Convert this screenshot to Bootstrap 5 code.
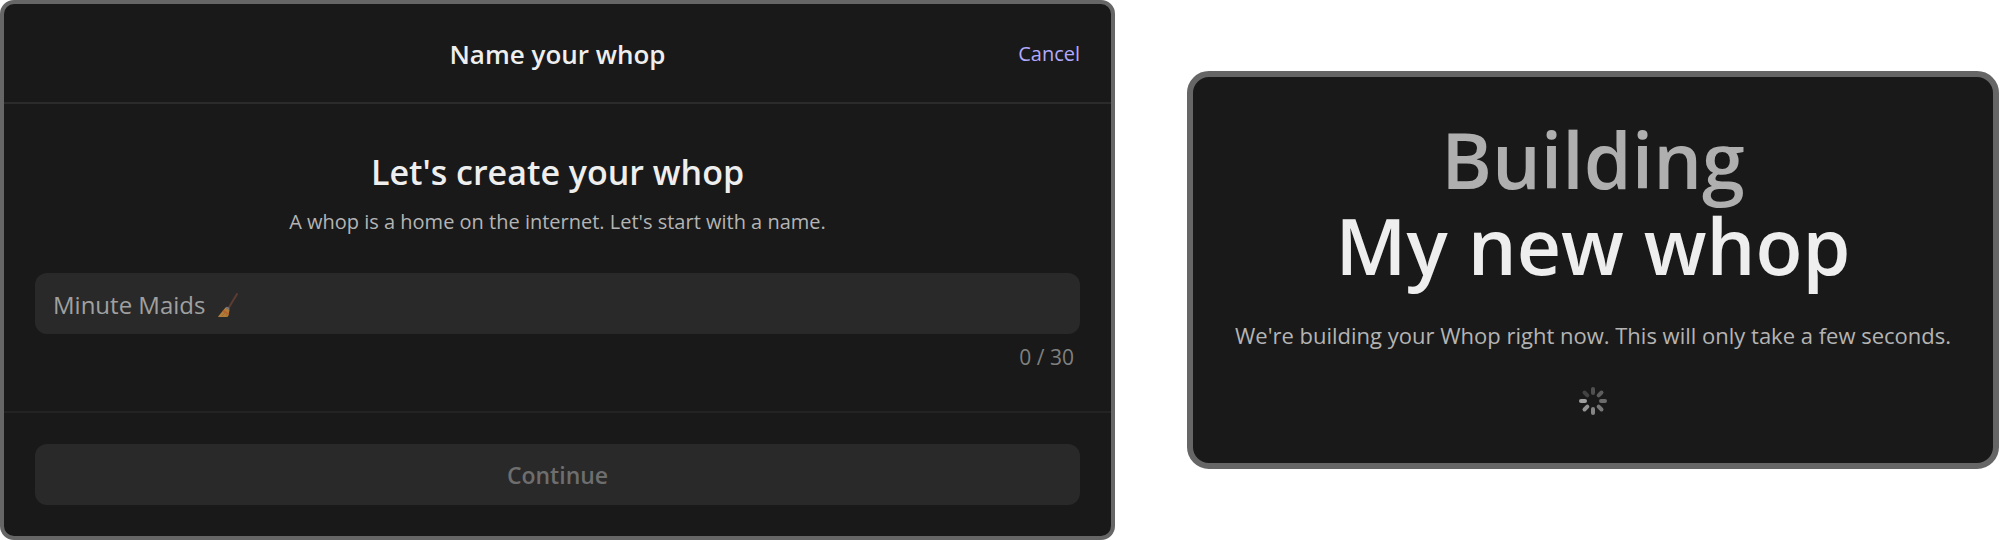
<!DOCTYPE html>
<html lang="en">
<head>
<meta charset="utf-8">
<meta name="viewport" content="width=device-width, initial-scale=1">
<title>Name your whop</title>
<link href="https://cdn.jsdelivr.net/npm/bootstrap@5.3.0/dist/css/bootstrap.min.css" rel="stylesheet">
<style>
  body { font-family: "Open Sans", "Noto Sans", sans-serif; background: #fff; }
  .panel { background: #191919; color: #eee; border: 4px solid #666; border-radius: 14px; }
  .panel-form { flex: 0 1 1115px; }
  .panel-status { flex: 0 1 812px; border-width: 6px; border-radius: 22px; padding: 40px 32px 48px; margin-right: 1px; }
  .panel-head { padding: 31px 31px 29px; border-bottom: 2px solid #2b2b2b; }
  .panel-head h1 { font-size: 26px; line-height: 38px; }
  .side { flex: 1 1 0; }
  .cancel-link { font-size: 20px; line-height: 38px; color: #b1a9ff; }
  .panel-main { padding: 46px 31px 39px; }
  .panel-main h2 { font-size: 34px; line-height: 44px; margin-bottom: 14px; }
  .intro { font-size: 20px; line-height: 28px; color: #b4b4b4; margin-bottom: 37px; }
  .name-input, .name-input:focus { height: 61px; padding: 2px 18px 0; font-size: 24px; color: #eee; background: #292929; border: 0; border-radius: 12px; }
  .name-input::placeholder { color: #a0a0a0; opacity: 1; }
  .name-input:not(:placeholder-shown) + .broom { display: none; }
  .broom { left: 182px; top: 19px; pointer-events: none; }
  .counter { font-size: 21px; line-height: 30px; color: #808080; margin-top: 8px; padding-right: 6px; }
  .panel-foot { padding: 31px; border-top: 2px solid #232323; }
  .continue-btn, .continue-btn:disabled { height: 61px; padding: 2px 18px 0; font-size: 23px; color: #6e6e6e; background: #292929; border: 0; border-radius: 12px; opacity: 1; }
  .headline { font-size: 77px; line-height: 86px; margin-bottom: 30px; }
  .headline-muted { color: #afafaf; }
  .status-text { font-size: 22px; line-height: 32px; color: #b4b4b4; margin-bottom: 36px; }
</style>
</head>
<body>
<main class="d-flex flex-wrap flex-lg-nowrap justify-content-between align-items-center">
  <form class="panel panel-form">
    <header class="panel-head d-flex align-items-center">
      <div class="side"></div>
      <h1 class="fw-semibold mb-0">Name your whop</h1>
      <div class="side text-end"><a href="#" class="cancel-link text-decoration-none">Cancel</a></div>
    </header>
    <div class="panel-main">
      <h2 class="fw-semibold text-center"><label for="whopName">Let's create your whop</label></h2>
      <p class="intro text-center">A whop is a home on the internet. Let's start with a name.</p>
      <div class="position-relative">
        <input type="text" id="whopName" class="form-control name-input" placeholder="Minute Maids" maxlength="30">
        <svg class="broom position-absolute" width="22" height="26" viewBox="0 0 22 26" aria-hidden="true">
          <path d="M20 2 11 17" stroke="#5d3c31" stroke-width="2" stroke-linecap="round" fill="none"/>
          <path d="M8.500 15.500 12.500 18 11.500 23.500Q11 25 9.500 25H1.500Q.8 25 1.300 24.200Z" fill="#b17c38"/>
          <path d="M6.500 18 12.200 21.500 12 23 5 19.500Z" fill="#b5602e"/>
          <path d="M8.500 15.500Q9.500 14.200 11.500 15.300 13 16.500 12.300 18.300Z" fill="#737780"/>
          <path d="m8 21-3 3M10 22l-1 2" stroke="#966425" stroke-width=".6"/>
        </svg>
      </div>
      <div class="counter text-end">0 / 30</div>
    </div>
    <footer class="panel-foot">
      <button type="submit" class="btn continue-btn w-100 fw-semibold" disabled>Continue</button>
    </footer>
  </form>

  <section class="panel panel-status text-center" role="status">
    <h2 class="headline fw-semibold"><span class="headline-muted d-block">Building</span><span class="d-block">My new whop</span></h2>
    <p class="status-text">We're building your Whop right now. This will only take a few seconds.</p>
    <svg class="d-block mx-auto" width="28" height="28" viewBox="-14 -14 28 28" fill="none" stroke-width="4" stroke-linecap="round" aria-hidden="true">
      <path stroke="#505050" d="M0-12v4"/>
      <path stroke="#5d5d5d" d="M0-12v4" transform="rotate(45)"/>
      <path stroke="#6b6b6b" d="M0-12v4" transform="rotate(90)"/>
      <path stroke="#777" d="M0-12v4" transform="rotate(135)"/>
      <path stroke="#858585" d="M0-12v4" transform="rotate(180)"/>
      <path stroke="#939393" d="M0-12v4" transform="rotate(225)"/>
      <path stroke="#a0a0a0" d="M0-12v4" transform="rotate(270)"/>
      <path stroke="#424242" d="M0-12v4" transform="rotate(315)"/>
    </svg>
  </section>
</main>
<script src="https://cdn.jsdelivr.net/npm/bootstrap@5.3.0/dist/js/bootstrap.bundle.min.js"></script>
</body>
</html>
